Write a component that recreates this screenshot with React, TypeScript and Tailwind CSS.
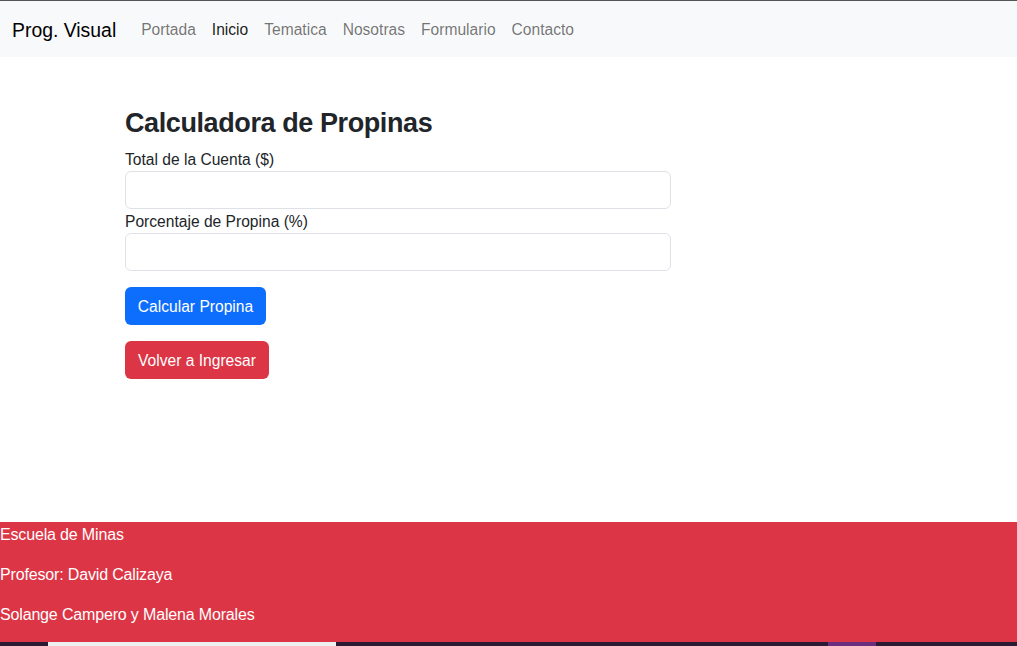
import React from "react";

export default function App() {
  const links = ["Portada", "Inicio", "Tematica", "Nosotras", "Formulario", "Contacto"];
  return (
    <div className="w-[1017px] h-[646px] bg-white flex flex-col overflow-hidden font-['Liberation_Sans',Arial,sans-serif] text-[#212529]">
      <div className="h-px bg-[#555555]" />
      <nav className="h-[56px] bg-[#f8f9fa] flex items-center px-3 pt-[2px]">
        <span className="text-[19.4px] text-black mr-[17px] leading-[30px]">Prog. Visual</span>
        <div className="flex">
          {links.map((l) => (
            <span
              key={l}
              className={`px-2 text-[15.6px] leading-6 ${l === "Inicio" ? "text-black/90" : "text-black/55"}`}
            >
              {l}
            </span>
          ))}
        </div>
      </nav>
      <main className="flex-1 pl-[125px] pt-[48px]">
        <div className="w-[546px] flex flex-col">
          <h2 className="text-[27px] font-bold leading-[32px] pt-[2px] mb-[8px] tracking-[-0.015em]">Calculadora de Propinas</h2>
          <label className="text-[15.6px] leading-[22px] pt-[2px]">Total de la Cuenta ($)</label>
          <div className="h-[38px] border border-[#dee2e6] rounded-[6px]" />
          <label className="text-[15.6px] leading-[22px] pt-[2px]">Porcentaje de Propina (%)</label>
          <div className="h-[38px] border border-[#dee2e6] rounded-[6px]" />
          <div className="mt-[16px]">
            <button className="h-[38px] px-3 pt-[2px] rounded-[6px] bg-[#0d6efd] text-white text-[15.6px] w-[141px]">Calcular Propina</button>
          </div>
          <div className="mt-[16px]">
            <button className="h-[38px] px-3 pt-[2px] rounded-[6px] bg-[#dc3545] text-white text-[15.6px] w-[144px]">Volver a Ingresar</button>
          </div>
        </div>
      </main>
      <footer className="bg-[#dc3545] text-white h-[120px] flex flex-col text-[16px] leading-6 tracking-[-0.01em] pt-px">
        <p className="mb-4">Escuela de Minas</p>
        <p className="mb-4">Profesor: David Calizaya</p>
        <p className="mb-4">Solange Campero y Malena Morales</p>
      </footer>
      <div className="h-[4px] bg-[#2a1a33] flex">
        <div className="w-[48px]" />
        <div className="w-[288px] bg-[#eef0f0]" />
        <div className="w-[492px]" />
        <div className="w-[48px] bg-[#6b2d7d]" />
      </div>
    </div>
  );
}
